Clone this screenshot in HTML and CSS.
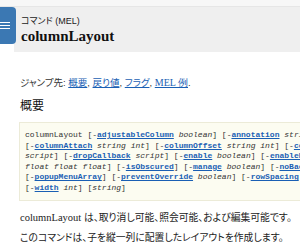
FILE: index.html
```html
<!DOCTYPE html>
<html lang="ja">
<head>
    <meta charset="UTF-8">
    <title>columnLayout</title>
    <link rel="stylesheet" href="styles.css">
</head>
<body>
    <div class="topbar"></div>
    <div class="header">
        <div class="menu-button">
            <span></span><span></span><span></span>
        </div>
        <div class="title-block">
            <div class="kind">コマンド (MEL)</div>
            <h1>columnLayout</h1>
        </div>
    </div>

    <div class="content">
        <p class="jump">ジャンプ先: <a href="#">概要</a>, <a href="#">戻り値</a>, <a href="#">フラグ</a>, <a href="#" class="latin">MEL 例</a>.</p>

        <h2>概要</h2>

        <div class="synopsis">
<div class="line">columnLayout [-<a href="#">adjustableColumn</a> <i>boolean</i>] [-<a href="#">annotation</a> <i>string</i>] [-<a href="#">backgroundColor</a> <i>float float float</i>] [-<a href="#">childArray</a>] [-<a href="#">columnAlign</a> <i>string</i>]</div>
<div class="line">[-<a href="#">columnAttach</a> <i>string int</i>] [-<a href="#">columnOffset</a> <i>string int</i>] [-<a href="#">columnWidth</a> <i>int</i>] [-<a href="#">dragCallback</a></div>
<div class="line"><i>script</i>] [-<a href="#">dropCallback</a> <i>script</i>] [-<a href="#">enable</a> <i>boolean</i>] [-<a href="#">enableBackground</a> <i>boolean</i>] [-<a href="#">highlightColor</a></div>
<div class="line"><i>float float float</i>] [-<a href="#">isObscured</a>] [-<a href="#">manage</a> <i>boolean</i>] [-<a href="#">noBackground</a> <i>boolean</i>] [-<a href="#">parent</a> <i>string</i>]</div>
<div class="line">[-<a href="#">popupMenuArray</a>] [-<a href="#">preventOverride</a> <i>boolean</i>] [-<a href="#">rowSpacing</a> <i>int</i>] [-<a href="#">statusBarMessage</a> <i>string</i>]</div>
<div class="line">[-<a href="#">width</a> <i>int</i>] [<i>string</i>]</div>
        </div>

        <p class="text"><span class="latin">columnLayout</span> は、取り消し可能、照会可能、および編集可能です。</p>
        <p class="text">このコマンドは、子を縦一列に配置したレイアウトを作成します。</p>
    </div>
</body>
</html>
```

FILE: styles.css
```css
html, body {
    overflow: hidden;
}

body {
    margin: 0;
    background: #ffffff;
    color: #222;
    font-family: "Liberation Sans", "Noto Sans CJK JP", sans-serif;
}

.topbar {
    height: 7px;
    background: #f7f7f7;
    border-bottom: 1px solid #e6e6e6;
    box-sizing: border-box;
}

.header {
    display: flex;
    margin-left: 14px;
    height: 45px;
    background: #efefef;
}

.menu-button {
    margin-left: -14px;
    width: 16px;
    height: 37px;
    background: #3b78b3;
    border-radius: 0 4px 4px 0;
    display: flex;
    flex-direction: column;
    justify-content: center;
    gap: 2px;
}

.menu-button span {
    display: block;
    width: 10px;
    height: 1px;
    background: #fff;
}

.title-block {
    padding: 9px 0 0 5px;
}

.kind {
    font-size: 9px;
    line-height: 10px;
    color: #222;
    font-feature-settings: "palt";
}

h1 {
    margin: 2px 0 0 0;
    font-family: "Liberation Serif", serif;
    font-size: 15px;
    line-height: 17px;
    font-weight: bold;
    color: #111;
}

.content {
    padding-left: 20px;
}

.jump {
    margin: 24px 0 0 0;
    font-size: 9.5px;
    line-height: 14px;
    color: #333;
    font-feature-settings: "palt";
}

.jump a {
    color: #1a5fb4;
}

.latin {
    font-family: "Liberation Serif", serif;
    font-size: 10.5px;
}

.jump .latin {
    font-size: 10px;
}

h2 {
    margin: 8px 0 0 0;
    font-size: 12px;
    line-height: 16px;
    font-weight: normal;
    color: #111;
}

.synopsis {
    margin: 8px 0 0 -1px;
    width: 620px;
    padding: 7px 5px 6px 5px;
    background: #fcfcf1;
    border: 1px solid #ecebd8;
    font-family: "Liberation Mono", monospace;
    font-size: 8px;
    line-height: 10.6px;
    color: #333;
}

.line {
    white-space: pre;
}

.synopsis a {
    color: #1a5fb4;
    font-weight: bold;
}

.text {
    margin: 10px 0 0 0;
    font-size: 9.8px;
    line-height: 14px;
    color: #222;
    white-space: nowrap;
    font-feature-settings: "palt";
}

.text + .text {
    margin-top: 6px;
}
```
